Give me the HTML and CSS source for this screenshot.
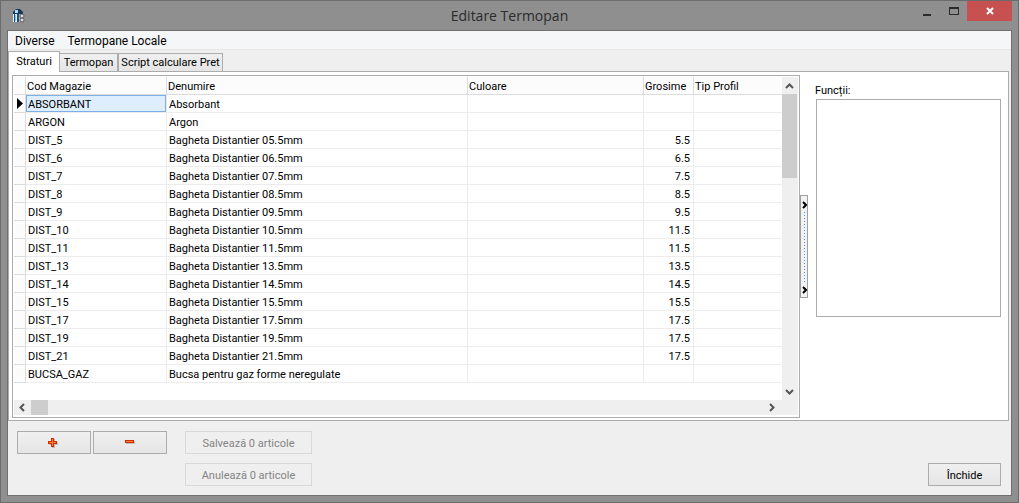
FILE: index.html
```html
<!DOCTYPE html>
<html lang="ro">
<head>
<meta charset="utf-8">
<title>Editare Termopan</title>
<link rel="stylesheet" href="styles.css">
</head>
<body>
<div class="window">
  <header class="titlebar">
    <svg class="app-icon" width="14" height="16" viewBox="0 0 14 16" aria-hidden="true">
      <path d="M1 5V4L4 1H8L11 4V6H1Z" fill="#17385f"/>
      <path d="M3 2H6V5H3Z" fill="#b5dcf2"/>
      <path d="M1 6H7V14H1Z" fill="#e6eef2"/>
      <path d="M2 6H3V14H2ZM5 6H7V14H5Z" fill="#1c4f86"/>
      <path d="M3 7H4V13H3Z" fill="#7fc4ee"/>
      <path d="M7 6H12V14H7Z" fill="#b9b9b9"/>
      <ellipse cx="10" cy="8" rx="2" ry="2" fill="#e2e2e2" stroke="#555"/>
      <ellipse cx="10" cy="12" rx="2" ry="2" fill="#e2e2e2" stroke="#555"/>
    </svg>
    <h1 class="title">Editare Termopan</h1>
    <div class="caption-buttons">
      <button class="caption" type="button" aria-label="Minimizare"><svg width="10" height="12" viewBox="0 0 10 12"><path d="M1 9H9V11H1Z" fill="#2b2b2b"/></svg></button>
      <button class="caption" type="button" aria-label="Maximizare"><svg width="10" height="12" viewBox="0 0 10 12"><path d="M0 2H10V10H0ZM1 4V9H9V4Z" fill="#2b2b2b" fill-rule="evenodd"/></svg></button>
      <button class="caption caption-close" type="button" aria-label="Închidere fereastră"><svg width="8" height="8" viewBox="0 0 8 8"><path d="M1 1L7 7M7 1L1 7" stroke="#fff" stroke-width="2"/></svg></button>
    </div>
  </header>
  <main class="client">
    <nav class="menu">
      <button class="menu-item" type="button">Diverse</button>
      <button class="menu-item" type="button">Termopane Locale</button>
    </nav>
    <div class="tabs" role="tablist">
      <button class="tab tab-active" type="button" role="tab" aria-selected="true">Straturi</button>
      <button class="tab tab-second" type="button" role="tab" aria-selected="false">Termopan</button>
      <button class="tab tab-third" type="button" role="tab" aria-selected="false">Script calculare Pret</button>
    </div>
    <section class="page" role="tabpanel">
      <div class="grid">
        <div class="grid-body">
          <table class="table">
            <colgroup><col class="c-mark"><col class="c-code"><col class="c-name"><col class="c-color"><col class="c-thick"><col></colgroup>
            <thead>
              <tr><th></th><th>Cod Magazie</th><th>Denumire</th><th>Culoare</th><th>Grosime</th><th>Tip Profil</th></tr>
            </thead>
            <tbody>
              <tr><td><svg class="marker" width="6" height="11" viewBox="0 0 6 11"><path d="M0 0L6 5.5L0 11Z"/></svg></td><td class="selected">ABSORBANT</td><td>Absorbant</td><td></td><td></td><td></td></tr>
              <tr><td></td><td>ARGON</td><td>Argon</td><td></td><td></td><td></td></tr>
              <tr><td></td><td>DIST_5</td><td>Bagheta Distantier 05.5mm</td><td></td><td>5.5</td><td></td></tr>
              <tr><td></td><td>DIST_6</td><td>Bagheta Distantier 06.5mm</td><td></td><td>6.5</td><td></td></tr>
              <tr><td></td><td>DIST_7</td><td>Bagheta Distantier 07.5mm</td><td></td><td>7.5</td><td></td></tr>
              <tr><td></td><td>DIST_8</td><td>Bagheta Distantier 08.5mm</td><td></td><td>8.5</td><td></td></tr>
              <tr><td></td><td>DIST_9</td><td>Bagheta Distantier 09.5mm</td><td></td><td>9.5</td><td></td></tr>
              <tr><td></td><td>DIST_10</td><td>Bagheta Distantier 10.5mm</td><td></td><td>11.5</td><td></td></tr>
              <tr><td></td><td>DIST_11</td><td>Bagheta Distantier 11.5mm</td><td></td><td>11.5</td><td></td></tr>
              <tr><td></td><td>DIST_13</td><td>Bagheta Distantier 13.5mm</td><td></td><td>13.5</td><td></td></tr>
              <tr><td></td><td>DIST_14</td><td>Bagheta Distantier 14.5mm</td><td></td><td>14.5</td><td></td></tr>
              <tr><td></td><td>DIST_15</td><td>Bagheta Distantier 15.5mm</td><td></td><td>15.5</td><td></td></tr>
              <tr><td></td><td>DIST_17</td><td>Bagheta Distantier 17.5mm</td><td></td><td>17.5</td><td></td></tr>
              <tr><td></td><td>DIST_19</td><td>Bagheta Distantier 19.5mm</td><td></td><td>17.5</td><td></td></tr>
              <tr><td></td><td>DIST_21</td><td>Bagheta Distantier 21.5mm</td><td></td><td>17.5</td><td></td></tr>
              <tr><td></td><td>BUCSA_GAZ</td><td>Bucsa pentru gaz forme neregulate</td><td></td><td></td><td></td></tr>
            </tbody>
          </table>
          <div class="vscroll">
            <button class="arrow" type="button" aria-label="Sus"><svg width="9" height="6" viewBox="0 0 9 6"><path d="M1 5L4.5 1.5L8 5"/></svg></button>
            <div class="vthumb"></div>
            <button class="arrow arrow-end" type="button" aria-label="Jos"><svg width="9" height="6" viewBox="0 0 9 6"><path d="M1 1L4.5 4.5L8 1"/></svg></button>
          </div>
        </div>
        <div class="hscroll">
          <button class="arrow" type="button" aria-label="Stânga"><svg width="7" height="9" viewBox="0 0 7 9"><path d="M5 1L1.5 4.5L5 8"/></svg></button>
          <div class="hthumb"></div>
          <button class="arrow arrow-right" type="button" aria-label="Dreapta"><svg width="7" height="9" viewBox="0 0 7 9"><path d="M1 1L4.5 4.5L1 8"/></svg></button>
        </div>
      </div>
      <button class="splitter" type="button" aria-label="Restrânge panoul">
        <svg width="5" height="8" viewBox="0 0 5 8"><path d="M1 1L4 4L1 7"/></svg>
        <span class="dots"></span>
        <svg width="5" height="8" viewBox="0 0 5 8"><path d="M1 1L4 4L1 7"/></svg>
      </button>
      <aside class="side">
        <label class="side-label" for="functii">Funcții:</label>
        <select class="list" id="functii" size="12"></select>
      </aside>
    </section>
    <footer class="footer">
      <div class="actions">
        <button class="btn btn-icon" type="button" aria-label="Adaugă"><svg width="12" height="12" viewBox="0 0 12 12"><path d="M4 2H7V5H10V8H7V11H4V8H1V5H4Z" fill="#bdbdbd"/><path d="M3 1H6V4H9V7H6V10H3V7H0V4H3Z" fill="#d02c00"/><path d="M4 2H5V5H8V6H5V9H4V6H1V5H4Z" fill="#ff8030"/></svg></button>
        <button class="btn btn-icon" type="button" aria-label="Șterge"><svg width="12" height="12" viewBox="0 0 12 12"><path d="M2 4H11V7H2Z" fill="#bdbdbd"/><path d="M1 3H10V6H1Z" fill="#d02c00"/><path d="M2 4H9V5H2Z" fill="#ff8030"/></svg></button>
      </div>
      <div class="changes">
        <button class="btn" type="button" disabled>Salvează 0 articole</button>
        <button class="btn" type="button" disabled>Anulează 0 articole</button>
      </div>
      <button class="btn btn-close" type="button">Închide</button>
    </footer>
  </main>
</div>
</body>
</html>
```
FILE: styles.css
```css
* { box-sizing: border-box; }

body {
  margin: 0;
  font-family: Roboto, sans-serif;
  font-size: 11px;
  line-height: 16px;
  color: #000;
}

button {
  margin: 0;
  padding: 0;
  border: 0;
  background: none;
  color: inherit;
  font: inherit;
}

svg { display: block; flex: none; }

.window {
  display: flex;
  flex-direction: column;
  min-height: 100vh;
  padding: 0 6px 6px;
  border: 1px solid #6b6b6b;
  background: #8f8f8f;
}

.titlebar {
  display: grid;
  grid-template-columns: 1fr auto 1fr;
  height: 29px;
}

.app-icon { margin: 7px 0 0 5px; }

.title {
  margin: 0;
  font: 400 14px/30px "Open Sans", sans-serif;
  color: #2b2b2b;
}

.caption-buttons {
  display: flex;
  justify-content: flex-end;
  height: 20px;
}

.caption {
  display: flex;
  align-items: center;
  justify-content: center;
  width: 27px;
}

.caption-close { width: 45px; background: #c75050; }

.client {
  flex: 1;
  display: flex;
  flex-direction: column;
  border: 1px solid #6f6f6f;
  background: #efefef;
}

.menu {
  display: flex;
  gap: 13px;
  height: 19px;
  padding-left: 7px;
  border-bottom: 1px solid #e6e6e6;
  background: #f5f6f7;
  font-size: 12px;
  line-height: 20px;
}

.tabs {
  display: flex;
  align-items: flex-end;
  height: 21px;
  padding-top: 1px;
}

.tab {
  height: 18px;
  padding-top: 1px;
  border: 1px solid #acacac;
  border-bottom: 0;
  background: linear-gradient(#f0f0f0, #e5e5e5);
}

.tab-active {
  position: relative;
  z-index: 1;
  width: 52px;
  height: 21px;
  margin-bottom: -1px;
  padding: 0;
  background: #fff;
}

.tab-second { width: 58px; border-left: 0; }
.tab-third { width: 105px; }

.page {
  flex: 1;
  display: flex;
  margin-right: 2px;
  padding: 3px 7px 2px 3px;
  border: 1px solid #acacac;
  background: #fff;
}

.grid {
  flex: 1;
  min-width: 0;
  display: flex;
  flex-direction: column;
  padding: 1px 1px 2px;
  border: 1px solid #acacac;
}

.grid-body { flex: 1; display: flex; }

.table {
  flex: 1;
  align-self: flex-start;
  width: 100%;
  table-layout: fixed;
  border-collapse: separate;
  border-spacing: 0;
}

.c-mark { width: 12px; }
.c-code { width: 141px; }
.c-name { width: 301px; }
.c-color { width: 176px; }
.c-thick { width: 50px; }

.table th,
.table td {
  height: 18px;
  padding: 2px 3px 0 2px;
  border: solid #ececec;
  border-width: 0 1px 1px 0;
  font-weight: 400;
  line-height: 15px;
  text-align: left;
  white-space: nowrap;
}

.table th {
  padding-left: 1px;
  border-color: #dcdcdc;
  background: #fcfcfc;
}

.table td:nth-child(1) { padding: 0 2px 0 3px; border-color: #dcdcdc; background: #fcfcfc; }
.table td:nth-child(5) { text-align: right; }
.table th:last-child,
.table td:last-child { border-right: 0; }

.table .selected { background: #deeeff; box-shadow: inset 0 0 0 1px #7eb0e8; }

.marker { fill: #000; }

.vscroll,
.hscroll { display: flex; background: #efefef; }
.vscroll { flex-direction: column; width: 16px; }
.hscroll { height: 15px; }

.arrow {
  display: flex;
  align-items: center;
  justify-content: center;
  width: 17px;
  height: 17px;
}

.vscroll .arrow { width: 15px; }
.hscroll .arrow { height: 15px; }
.arrow-end { margin-top: auto; }
.hscroll .arrow-right { margin: 0 17px 0 auto; }
.arrow path { fill: none; stroke: #555; stroke-width: 2; }

.vthumb { width: 15px; height: 84px; background: #cdcdcd; }
.hthumb { width: 17px; height: 15px; background: #cdcdcd; }

.splitter {
  align-self: center;
  display: flex;
  flex-direction: column;
  align-items: center;
  gap: 3px;
  width: 8px;
  height: 103px;
  padding: 5px 0 3px;
  border: 1px solid #9f9f9f;
  background: #f2f2f2;
}

.splitter path { fill: none; stroke: #000; stroke-width: 2; }

.dots { flex: 1; width: 1px; background: repeating-linear-gradient(#3399ff 0 1px, transparent 1px 3px); }

.side { width: 193px; padding: 8px 0 0 8px; }
.side-label { display: block; height: 16px; margin-left: -1px; }

.list {
  display: block;
  width: 100%;
  height: 218px;
  border: 1px solid #acacac;
  border-radius: 0;
  background: #fff;
}

.footer {
  display: flex;
  align-items: flex-start;
  padding: 10px 10px 9px 9px;
}

.actions { display: flex; gap: 2px; }

.changes {
  display: flex;
  flex-direction: column;
  gap: 9px;
  margin-left: 18px;
}

.btn {
  display: flex;
  align-items: center;
  justify-content: center;
  width: 127px;
  height: 23px;
  padding-top: 2px;
  border: 1px solid #acacac;
  background: linear-gradient(#f0f0f0, #e5e5e5);
}

.btn:disabled { border-color: #d9d9d9; background: #efefef; color: #838383; }
.btn-icon { width: 74px; padding-top: 0; }
.btn-close { align-self: flex-end; width: 73px; margin-left: auto; }
```
